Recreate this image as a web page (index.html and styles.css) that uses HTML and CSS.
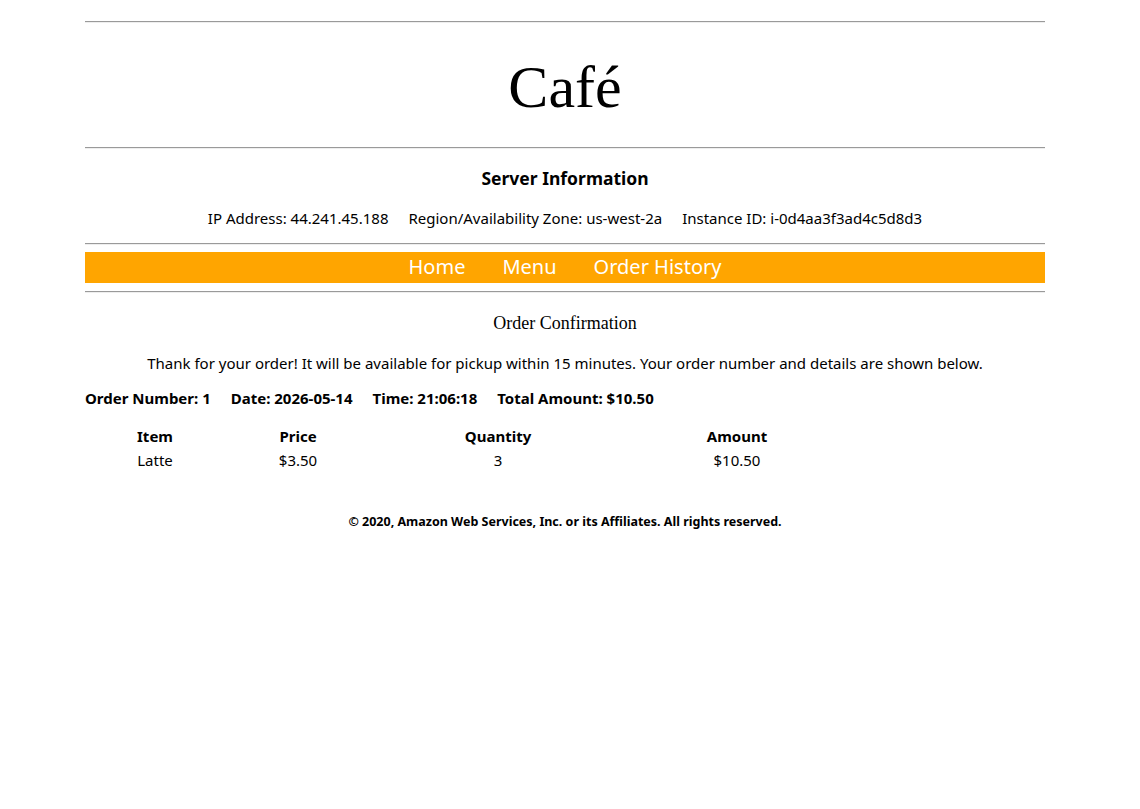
FILE: index.html
```html
<!DOCTYPE html>
<html lang="en">
  <head>
    <meta charset="utf-8">
    <meta name="viewport" content="width=device-width, initial-scale=1">
    <title>Café - Order Confirmation</title>
    <link rel="stylesheet" href="styles.css">
  </head>
  <body>
    <section>
      <hr>
      <header>
        <h1 class="title">Café</h1>
      </header>
      <hr>
      <div class="server">
        <h2>Server Information</h2>
        <div class="fields">
          <span>IP Address: 44.241.45.188</span>
          <span>Region/Availability Zone: us-west-2a</span>
          <span>Instance ID: i-0d4aa3f3ad4c5d8d3</span>
        </div>
      </div>
      <hr>
      <nav>
        <a href="#">Home</a>
        <a href="#">Menu</a>
        <a href="#">Order History</a>
      </nav>
      <hr>

      <article>
        <h3>Order Confirmation</h3>
        <p class="note">Thank for your order! It will be available for pickup within 15 minutes. Your order number and details are shown below.</p>
        <div class="summary">
          <span>Order Number: 1</span>
          <span>Date: 2026-05-14</span>
          <span>Time: 21:06:18</span>
          <span>Total Amount: $10.50</span>
        </div>
        <table class="items">
          <colgroup>
            <col class="c-item">
            <col class="c-price">
            <col class="c-qty">
            <col class="c-amount">
          </colgroup>
          <tr>
            <th>Item</th>
            <th>Price</th>
            <th>Quantity</th>
            <th>Amount</th>
          </tr>
          <tr>
            <td>Latte</td>
            <td>$3.50</td>
            <td>3</td>
            <td>$10.50</td>
          </tr>
        </table>
      </article>

      <footer>
        © 2020, Amazon Web Services, Inc. or its Affiliates. All rights reserved.
      </footer>
    </section>
  </body>
</html>
```

FILE: styles.css
```css
body {
    margin: 0;
    padding: 21px 10px 0 0;
    background: white;
    color: black;
    font-family: "Noto Sans", "Open Sans", sans-serif;
    font-size: 15px;
}

section {
    width: 960px;
    margin: 0 auto;
}

hr {
    margin: 0;
    border: 0;
    border-top: 1px solid #9a9a9a;
    border-bottom: 1px solid #eeeeee;
}

header {
    padding: 30px 0 25px;
    text-align: center;
}

header .title {
    margin: 0;
    font-family: "Liberation Serif", "Times New Roman", serif;
    font-size: 60px;
    font-weight: normal;
    line-height: 69px;
}

.server {
    padding: 17px 0 15px;
    text-align: center;
}

.server h2 {
    margin: 0 0 18px;
    font-size: 17.5px;
    font-weight: bold;
    line-height: 24px;
}

.server .fields, .summary {
    display: flex;
    gap: 20px;
    line-height: 20px;
}

.server .fields {
    justify-content: center;
}

nav {
    display: flex;
    justify-content: center;
    gap: 37px;
    margin: 7px 0 8px;
    padding: 1px 0 3px;
    background: #ffa500;
}

nav a {
    color: white;
    font-size: 20px;
    line-height: 27px;
    text-decoration: none;
}

article {
    padding-top: 20px;
}

article h3 {
    margin: 0;
    text-align: center;
    font-family: "Liberation Serif", "Times New Roman", serif;
    font-size: 18px;
    font-weight: normal;
    line-height: 20px;
}

.note {
    margin: 20px 0 0;
    text-align: center;
    line-height: 20px;
}

.summary {
    margin-top: 15px;
    font-weight: bold;
}

.items {
    margin-top: 15px;
    border-collapse: separate;
    border-spacing: 0 2px;
    table-layout: fixed;
}

.items .c-item {
    width: 140px;
}

.items .c-price {
    width: 146px;
}

.items .c-qty {
    width: 254px;
}

.items .c-amount {
    width: 224px;
}

.items th, .items td {
    padding: 1px 0;
    text-align: center;
    line-height: 20px;
}

footer {
    margin-top: 41px;
    text-align: center;
    font-size: 12.5px;
    font-weight: bold;
    line-height: 16px;
}
```
